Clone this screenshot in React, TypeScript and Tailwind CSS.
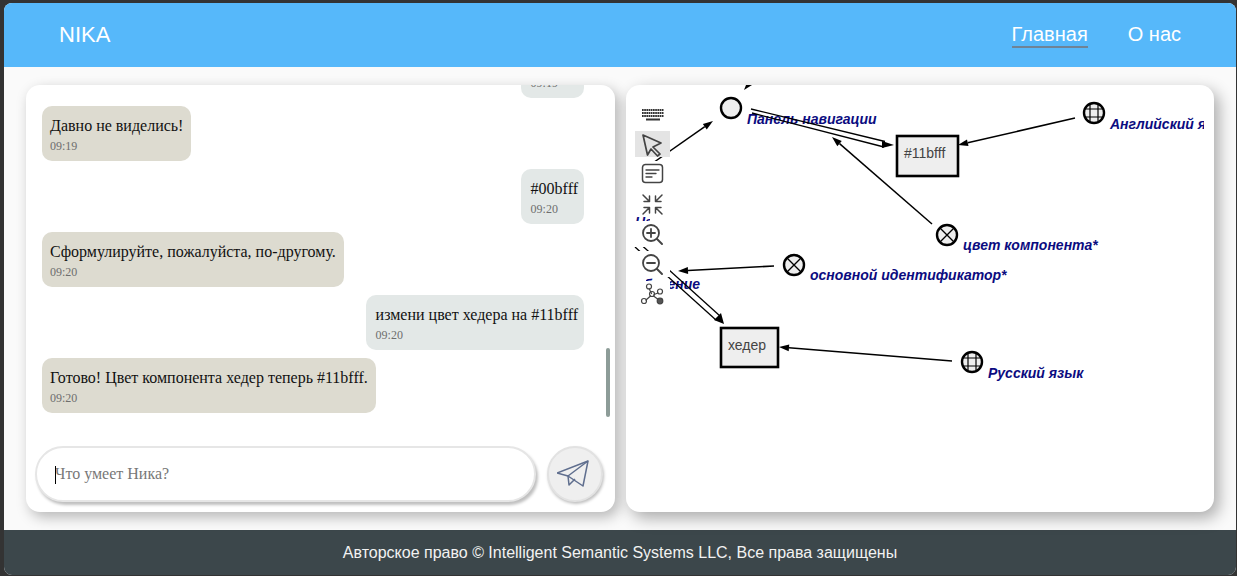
import React from "react";

const sans = "font-['Liberation_Sans',Arial,sans-serif]";
const serif = "font-['Liberation_Serif','Times_New_Roman',serif]";

type Msg = { me: boolean; text: string; time: string };
const msgs: Msg[] = [
  { me: true, text: "#00bfff", time: "09:19" },
  { me: false, text: "Давно не виделись!", time: "09:19" },
  { me: true, text: "#00bfff", time: "09:20" },
  { me: false, text: "Сформулируйте, пожалуйста, по-другому.", time: "09:20" },
  { me: true, text: "измени цвет хедера на #11bfff", time: "09:20" },
  { me: false, text: "Готово! Цвет компонента хедер теперь #11bfff.", time: "09:20" },
];

function Bubble({ m }: { m: Msg }) {
  return (
    <div className={`flex ${m.me ? "justify-end" : "justify-start"}`}>
      <div className={`h-[55px] shrink-0 rounded-[10px] pt-[7px] ${m.me ? "bg-[#e3e8e7] pl-[10px] pr-[6px]" : "bg-[#dddbd0] px-[8px]"}`}>
        <div className="text-[16px] leading-[25px] text-[#111] whitespace-nowrap">{m.text}</div>
        <div className="text-[12px] leading-[16px] text-[#6e6e6e]">{m.time}</div>
      </div>
    </div>
  );
}

function ChatPanel() {
  return (
    <section className={`relative flex h-[427px] w-[589px] flex-col rounded-[14px] bg-white shadow-[4px_5px_14px_rgba(0,0,0,0.28)] ${serif}`}>
      <div className="flex h-[345px] flex-col justify-end gap-[8px] overflow-hidden rounded-t-[14px] pl-[16px] pr-[31px] pb-[17px]">
        {msgs.map((m, i) => (
          <Bubble key={i} m={m} />
        ))}
      </div>
      <div className="absolute left-[580px] top-[263px] h-[69px] w-[4px] rounded-[2px] bg-[#8d9c98]" />
      <div className="mt-[16px] flex items-center gap-[11px] pl-[9px]">
        <div className="relative h-[56px] w-[501px] rounded-[28px] border-2 border-[#e6e6e6] bg-white shadow-[2px_3px_3px_rgba(0,0,0,0.25)]">
          <input
            readOnly
            placeholder="Что умеет Ника?"
            className="h-full w-full rounded-[28px] bg-transparent pl-[18px] text-[16px] text-[#222] outline-none placeholder:text-[#777]"
          />
          <span className="absolute left-[18px] top-[18px] h-[18px] w-px bg-black" />
        </div>
        <button className="flex h-[56px] w-[56px] items-center justify-center rounded-full border-2 border-[#e2e2e2] bg-[#efefef] shadow-[1px_2px_3px_rgba(0,0,0,0.25)]">
          <svg width="36" height="30" viewBox="3 0 36 30" fill="none" stroke="#5f6e8e" strokeWidth="1.5" strokeLinejoin="round">
            <path d="M34 2 L3 14 L14 17 L29 27 Z" />
            <path d="M34 2 L14 17 L15 26 L21 20" />
          </svg>
        </button>
      </div>
    </section>
  );
}

function ToolButton({ active, children }: { active?: boolean; children: React.ReactNode }) {
  return (
    <div className={`h-[26px] w-[35px] ${active ? "bg-[#e4e4e4]" : "bg-white"}`}>
      <svg width="35" height="26" viewBox="0 0 35 26" fill="none" stroke="#444" strokeWidth="1.5" strokeLinecap="round" strokeLinejoin="round">
        {children}
      </svg>
    </div>
  );
}

function Toolbar() {
  return (
    <div className="absolute left-[9px] top-[16px] flex flex-col gap-[4px]">
      <ToolButton>
        <g strokeLinecap="butt" strokeWidth="1.8" stroke="#333">
          <path d="M7 9 H29" strokeDasharray="1.7 0.5" />
          <path d="M7 12 H29" strokeDasharray="1.7 0.5" />
          <path d="M7 15 H29" strokeDasharray="1.7 0.5" />
          <path d="M11 18.5 H25" strokeWidth="1.8" />
        </g>
      </ToolButton>
      <ToolButton active>
        <path d="M8 4 L26 12 L18 16 L25 23 L22.5 25 L16 18 L12.5 24 Z" strokeWidth="1.7" />
      </ToolButton>
      <ToolButton>
        <rect x="7.5" y="3.5" width="20" height="18" rx="3" />
        <path d="M11 9 H24 M11 12.5 H21 M11 16 H17" strokeWidth="1.3" />
      </ToolButton>
      <ToolButton>
        <path d="M8 4 L14.5 10.5 M14.5 5 V10.5 H9" />
        <path d="M27 4 L20.5 10.5 M20.5 5 V10.5 H26" />
        <path d="M8 23 L14.5 16.5 M14.5 22 V16.5 H9" />
        <path d="M27 23 L20.5 16.5 M20.5 22 V16.5 H26" />
      </ToolButton>
      <ToolButton>
        <circle cx="16" cy="12" r="8" strokeWidth="1.8" />
        <path d="M22 18 L27 23" strokeWidth="2" />
        <path d="M12 12 H20 M16 8 V16" strokeWidth="1.8" />
      </ToolButton>
      <ToolButton>
        <circle cx="16" cy="12" r="8" strokeWidth="1.8" />
        <path d="M22 18 L27 23" strokeWidth="2" />
        <path d="M12 12 H20" strokeWidth="1.8" />
      </ToolButton>
      <ToolButton>
        <path d="M14 7.5 L16.5 12.5 M19 13.5 L23 12 M15.5 15 L11 19 M18.5 15 L24 19" strokeWidth="1.2" />
        <circle cx="14" cy="5.5" r="2.5" strokeWidth="1.2" />
        <circle cx="25" cy="10.5" r="2.5" strokeWidth="1.2" />
        <circle cx="9" cy="20" r="2.5" strokeWidth="1.2" />
        <circle cx="17" cy="13" r="2.5" strokeWidth="1.2" />
        <circle cx="25" cy="20" r="2.8" fill="#555" strokeWidth="1.2" />
      </ToolButton>
    </div>
  );
}

const label = "#0b0b80";

function Globe({ x, y }: { x: number; y: number }) {
  return (
    <g stroke="#000" fill="#eee">
      <circle cx={x} cy={y} r="10" strokeWidth="2.4" />
      <path d={`M${x - 10} ${y - 4} H${x + 10} M${x - 10} ${y + 4} H${x + 10} M${x - 4} ${y - 10} V${y + 10} M${x + 4} ${y - 10} V${y + 10}`} strokeWidth="1.2" fill="none" />
    </g>
  );
}

function Cross({ x, y }: { x: number; y: number }) {
  return (
    <g stroke="#000" fill="#eee">
      <circle cx={x} cy={y} r="10" strokeWidth="2.4" />
      <path d={`M${x - 7} ${y - 7} L${x + 7} ${y + 7} M${x + 7} ${y - 7} L${x - 7} ${y + 7}`} strokeWidth="1.4" fill="none" />
    </g>
  );
}

function Label({ x, y, anchor, clip, children }: { x: number; y: number; anchor?: "end"; clip?: string; children: string }) {
  return (
    <text x={x} y={y} textAnchor={anchor} clipPath={clip} fill={label} fontFamily="'Liberation Sans', Arial, sans-serif" fontSize="14" fontWeight="700" fontStyle="italic">
      {children}
    </text>
  );
}

function Arrow({ x1, y1, x2, y2 }: { x1: number; y1: number; x2: number; y2: number }) {
  const a = Math.atan2(y2 - y1, x2 - x1);
  const l = 10;
  const w = 3.4;
  const bx = x2 - l * Math.cos(a);
  const by = y2 - l * Math.sin(a);
  const px = -Math.sin(a) * w;
  const py = Math.cos(a) * w;
  return (
    <g>
      <line x1={x1} y1={y1} x2={bx} y2={by} stroke="#000" strokeWidth="1.5" />
      <polygon points={`${x2},${y2} ${bx + px},${by + py} ${bx - px},${by - py}`} fill="#000" />
    </g>
  );
}

function GraphPanel() {
  // the drawing's coordinates are those of the page, shifted by the panel's corner
  return (
    <section className="relative h-[427px] w-[588px] rounded-[14px] bg-white shadow-[5px_6px_16px_rgba(0,0,0,0.32)]">
      <svg width="578" height="427" viewBox="626 85 578 427" className="block overflow-hidden">
        <defs>
          <clipPath id="behind-top">
            <rect x="635" y="200" width="15" height="40" />
          </clipPath>
          <clipPath id="behind-bottom">
            <rect x="646" y="270" width="80" height="30" />
          </clipPath>
        </defs>
        {/* pieces that run behind the tool column */}
        <Label x={635} y={227} clip="url(#behind-top)">Название</Label>
        <Label x={700} y={289} anchor="end" clip="url(#behind-bottom)">Обучение</Label>
        <Arrow x1={640} y1={172} x2={713} y2={121} />
        <polygon points="744,90 752,85 746,85" fill="#000" />

        <Label x={747} y={124}>Панель навигации</Label>
        <Label x={1110} y={129}>Английский язык</Label>
        <Label x={963} y={250}>цвет компонента*</Label>
        <Label x={810} y={280}>основной идентификатор*</Label>
        <Label x={988} y={378}>Русский язык</Label>

        {/* double arrows */}
        <polygon points="882,141 894,145 882,148" fill="#000" />
        <line x1="751" y1="109" x2="885" y2="141.5" stroke="#000" strokeWidth="1.3" />
        <line x1="752" y1="113" x2="884" y2="147" stroke="#000" strokeWidth="1.3" />
        <line x1="642" y1="245.5" x2="720" y2="316" stroke="#000" strokeWidth="1.3" />
        <line x1="635" y1="247" x2="716" y2="320" stroke="#000" strokeWidth="1.3" />
        <polygon points="724,324 714,320 721,313" fill="#000" />

        <Arrow x1={1075} y1={118} x2={958} y2={145} />
        <Arrow x1={932} y1={224} x2={832} y2={137} />
        <Arrow x1={774} y1={266} x2={678} y2={271} />
        <Arrow x1={952} y1={361} x2={779} y2={347} />

        <circle cx="731" cy="108" r="10" fill="#eee" stroke="#000" strokeWidth="2.4" />
        <Globe x={1094} y={113} />
        <Globe x={972} y={362} />
        <Cross x={947} y={235} />
        <Cross x={794} y={265} />

        <rect x="897" y="136" width="61" height="40" fill="#eee" stroke="#000" strokeWidth="2.6" />
        <text x="904" y="158" fontFamily="'Liberation Sans', Arial, sans-serif" fontSize="14" fill="#444">#11bfff</text>
        <rect x="721" y="328" width="57" height="39" fill="#eee" stroke="#000" strokeWidth="2.6" />
        <text x="728" y="350" fontFamily="'Liberation Sans', Arial, sans-serif" fontSize="14" fill="#444">хедер</text>
      </svg>
      <Toolbar />
    </section>
  );
}

export default function App() {
  return (
    <div className={`h-[576px] w-[1237px] overflow-hidden bg-[#333] pb-px pl-[4px] pr-px pt-[3px] ${sans}`}>
      <div className="flex h-full flex-col overflow-hidden rounded-[8px] bg-[#fafafa]">
        <header className="flex h-[64px] shrink-0 items-center justify-between bg-[#56b8fa] pl-[55px] pr-[55px] text-white">
          <span className="text-[22px] leading-none">NIKA</span>
          <nav className="flex items-center gap-[40px] text-[20px] leading-[23px]">
            <a className="border-b-2 border-[#6f8396]">Главная</a>
            <a className="pb-[2px]">О нас</a>
          </nav>
        </header>
        <main className="flex flex-1 gap-[11px] pl-[22px] pt-[18px]">
          <ChatPanel />
          <GraphPanel />
        </main>
        <footer className="flex h-[45px] shrink-0 items-center justify-center bg-[#3c474b] text-[16px] text-[#f2f2f2]">
          Авторское право © Intelligent Semantic Systems LLC, Все права защищены
        </footer>
      </div>
    </div>
  );
}
